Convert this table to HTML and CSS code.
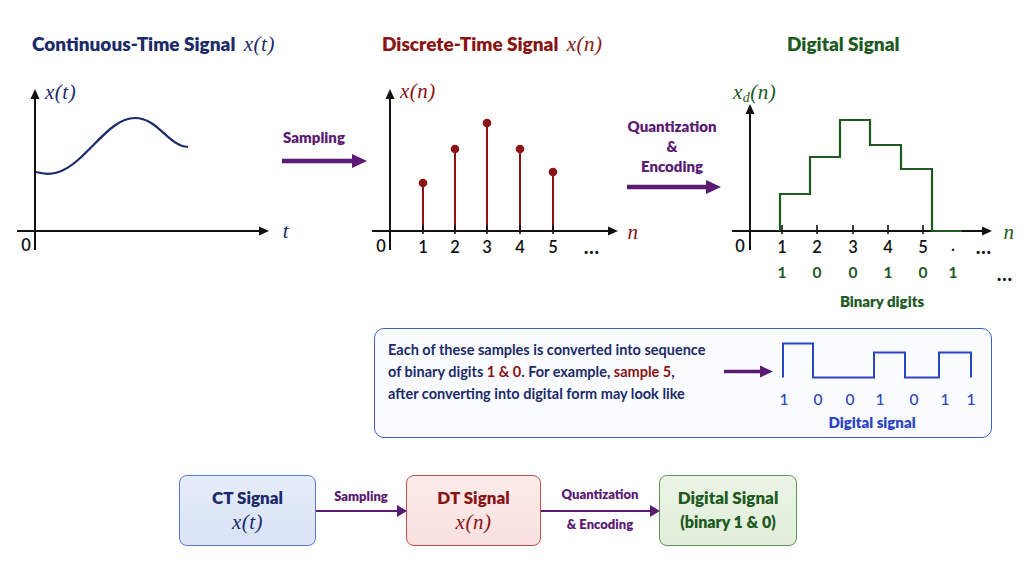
FILE: index.html
```html
<!DOCTYPE html>
<html lang="en">
<head>
<meta charset="utf-8">
<title>Continuous-Time, Discrete-Time and Digital Signals</title>
<link rel="stylesheet" href="styles.css">
</head>
<body>
<main class="page">
  <header class="titles">
    <h2 class="title navy">Continuous-Time Signal <span class="math">x(t)</span></h2>
    <h2 class="title red">Discrete-Time Signal <span class="math">x(n)</span></h2>
    <h2 class="title green">Digital Signal</h2>
  </header>

  <svg class="plots" width="1024" height="258" viewBox="0 60 1024 258" xmlns="http://www.w3.org/2000/svg">
    <!-- Panel 1: continuous-time -->
    <line class="ax" x1="35" y1="250" x2="35" y2="98"/>
    <polygon class="axh" points="35,89 30.5,99 39.5,99"/>
    <line class="ax" x1="17" y1="231" x2="260" y2="231"/>
    <polygon class="axh" points="269,231 259,226.5 259,235.5"/>
    <path class="curve" d="M36,172 C50,176 62,174 78,160 C100,140 115,118 135,118 C158,118 168,146 188,147"/>
    <text class="num" x="26" y="245">0</text>
    <text class="mathsvg navyf start" x="45" y="92">x(t)</text>
    <text class="mathsvg navyf" x="286" y="231">t</text>

    <!-- Sampling arrow -->
    <text class="arrlabel" x="314" y="137">Sampling</text>
    <line class="bigarrow" x1="282" y1="161" x2="354" y2="161"/>
    <polygon class="purplef" points="367,161 352,154 352,168"/>

    <!-- Panel 2: discrete-time -->
    <line class="ax" x1="390" y1="250" x2="390" y2="98"/>
    <polygon class="axh" points="390,89 385.5,99 394.5,99"/>
    <line class="ax" x1="372" y1="231" x2="609" y2="231"/>
    <polygon class="axh" points="618,231 608,226.5 608,235.5"/>
    <g class="stems">
      <line x1="423" y1="231" x2="423" y2="183"/>
      <line x1="455" y1="231" x2="455" y2="149"/>
      <line x1="487" y1="231" x2="487" y2="123"/>
      <line x1="520" y1="231" x2="520" y2="149"/>
      <line x1="553" y1="231" x2="553" y2="172"/>
    </g>
    <g class="ticks">
      <line x1="423" y1="225" x2="423" y2="234"/>
      <line x1="455" y1="225" x2="455" y2="234"/>
      <line x1="487" y1="225" x2="487" y2="234"/>
      <line x1="520" y1="225" x2="520" y2="234"/>
      <line x1="553" y1="225" x2="553" y2="234"/>
    </g>
    <g class="dots">
      <circle cx="423" cy="183" r="4.3"/>
      <circle cx="455" cy="149" r="4.3"/>
      <circle cx="487" cy="123" r="4.3"/>
      <circle cx="520" cy="149" r="4.3"/>
      <circle cx="553" cy="172" r="4.3"/>
    </g>
    <text class="num" x="381" y="246">0</text>
    <text class="num" x="423" y="247">1</text>
    <text class="num" x="455" y="247">2</text>
    <text class="num" x="487" y="247">3</text>
    <text class="num" x="520" y="247">4</text>
    <text class="num" x="553" y="247">5</text>
    <text class="ell" x="592" y="246">…</text>
    <text class="mathsvg redf start" x="400" y="91">x(n)</text>
    <text class="mathsvg redf" x="633" y="232">n</text>

    <!-- Quantization arrow -->
    <text class="arrlabel" x="672" y="126">Quantization</text>
    <text class="arrlabel" x="672" y="146">&amp;</text>
    <text class="arrlabel" x="672" y="166">Encoding</text>
    <line class="bigarrow" x1="627" y1="187" x2="708" y2="187"/>
    <polygon class="purplef" points="721,187 706,180 706,194"/>

    <!-- Panel 3: digital -->
    <line class="ax" x1="750" y1="250" x2="750" y2="113"/>
    <polygon class="axh" points="750,104 745.5,114 754.5,114"/>
    <line class="ax" x1="732" y1="231" x2="983" y2="231"/>
    <polygon class="axh" points="992,231 982,226.5 982,235.5"/>
    <g class="ticks">
      <line x1="782" y1="225" x2="782" y2="234"/>
      <line x1="817" y1="225" x2="817" y2="234"/>
      <line x1="853" y1="225" x2="853" y2="234"/>
      <line x1="888" y1="225" x2="888" y2="234"/>
      <line x1="923" y1="225" x2="923" y2="234"/>
    </g>
    <path class="steps" d="M780,231 V194 H810 V157 H840 V120 H870 V145 H901 V169 H932 V231 H962"/>
    <text class="num" x="740" y="246">0</text>
    <text class="num" x="782" y="247">1</text>
    <text class="num" x="817" y="247">2</text>
    <text class="num" x="853" y="247">3</text>
    <text class="num" x="888" y="247">4</text>
    <text class="num" x="923" y="247">5</text>
    <text class="num" x="953" y="245">.</text>
    <text class="ell" x="984" y="246">…</text>
    <g class="bin">
      <text x="782" y="272">1</text>
      <text x="817" y="272">0</text>
      <text x="853" y="272">0</text>
      <text x="888" y="272">1</text>
      <text x="923" y="272">0</text>
      <text x="953" y="272">1</text>
    </g>
    <text class="ell" x="1005" y="273">…</text>
    <text class="bintitle" x="882" y="301">Binary digits</text>
    <text class="mathsvg greenf start" x="733" y="92">x<tspan class="sub" dy="5">d</tspan><tspan dy="-5">(n)</tspan></text>
    <text class="mathsvg greenf" x="1009" y="232">n</text>
  </svg>

  <section class="info">
    <p class="info-text">Each of these samples is converted into sequence<br>of binary digits <span class="hl">1 &amp; 0</span>. For example, <span class="hl">sample 5</span>,<br>after converting into digital form may look like</p>
    <svg class="wave" width="278" height="107" viewBox="712 329.5 278 107" xmlns="http://www.w3.org/2000/svg">
      <line class="smallarrow" x1="723" y1="372" x2="760" y2="372"/>
      <polygon class="purplef" points="772,372 759,366 759,378"/>
      <path class="sq" d="M782,378 V344 H812 V378 H873 V353 H904 V378 H938 V353 H970 V378"/>
      <g class="wdig">
        <text x="783" y="399">1</text>
        <text x="817" y="399">0</text>
        <text x="849" y="399">0</text>
        <text x="879" y="399">1</text>
        <text x="913" y="399">0</text>
        <text x="944" y="399">1</text>
        <text x="970" y="399">1</text>
      </g>
      <text class="wlabel" x="871" y="422">Digital signal</text>
    </svg>
  </section>

  <section class="flow">
    <div class="box box-ct">
      <span class="box-title">CT Signal</span>
      <span class="math box-math">x(t)</span>
    </div>
    <div class="conn conn-s">
      <span class="conn-top">Sampling</span>
      <span class="conn-line"></span>
      <span class="conn-bottom"></span>
    </div>
    <div class="box box-dt">
      <span class="box-title">DT Signal</span>
      <span class="math box-math">x(n)</span>
    </div>
    <div class="conn conn-q">
      <span class="conn-top">Quantization</span>
      <span class="conn-line"></span>
      <span class="conn-bottom">&amp; Encoding</span>
    </div>
    <div class="box box-dg">
      <span class="box-title">Digital Signal</span>
      <span class="box-sub">(binary 1 &amp; 0)</span>
    </div>
  </section>
</main>
</body>
</html>
```

FILE: styles.css
```css
* { box-sizing: border-box; }

html, body {
  margin: 0;
  padding: 0;
  background: #ffffff;
}

body {
  font-family: Lato, "Open Sans", "Liberation Sans", sans-serif;
  color: #1b2a6b;
}

.page {
  width: 1024px;
  height: 576px;
  overflow: hidden;
}

/* ---------- titles ---------- */
.titles {
  display: grid;
  grid-template-columns: 350px 405px 1fr;
  padding: 32px 0 4px 32px;
  height: 60px;
}

.title {
  margin: 0;
  font-size: 19px;
  line-height: 24px;
  font-weight: 800;
  white-space: nowrap;
}

.navy { color: #1b2a6b; }
.red { color: #8a1414; }
.green { color: #1d5a1f; }

.math {
  font-family: "Liberation Serif", "DejaVu Serif", serif;
  font-style: italic;
  font-weight: 400;
  font-size: 21px;
  letter-spacing: 0.5px;
  margin-left: 4px;
}

/* ---------- plots ---------- */
.plots {
  display: block;
}

.plots text, .wave text {
  dominant-baseline: central;
  text-anchor: middle;
}

.plots text.start {
  text-anchor: start;
}

.ax {
  stroke: #111111;
  stroke-width: 2;
}

.axh { fill: #111111; }

.curve {
  fill: none;
  stroke: #1b2a6b;
  stroke-width: 2.2;
}

.stems line {
  stroke: #8a1414;
  stroke-width: 2;
}

.ticks line {
  stroke: #111111;
  stroke-width: 1.6;
}

.dots circle { fill: #8a1414; }

.steps {
  fill: none;
  stroke: #1d5a1f;
  stroke-width: 2.2;
}

.num {
  font-family: Lato, "Open Sans", sans-serif;
  font-size: 16.5px;
  font-weight: 600;
  fill: #111111;
}

.ell {
  font-family: Lato, "Open Sans", sans-serif;
  font-size: 20px;
  font-weight: 700;
  letter-spacing: 1px;
  fill: #111111;
}

.mathsvg {
  font-family: "Liberation Serif", "DejaVu Serif", serif;
  font-style: italic;
  font-size: 21px;
  letter-spacing: 0.5px;
}

.mathsvg .sub { font-size: 14px; }

.navyf { fill: #1b2a6b; }
.redf { fill: #8a1414; }
.greenf { fill: #1d5a1f; }
.purplef { fill: #5b1a73; }

.arrlabel {
  font-family: Lato, "Open Sans", sans-serif;
  font-size: 15px;
  font-weight: 800;
  fill: #5b1a73;
}

.bigarrow {
  stroke: #5b1a73;
  stroke-width: 4.5;
}

.bin text {
  font-family: Lato, "Open Sans", sans-serif;
  font-size: 15.5px;
  font-weight: 700;
  fill: #1d5a1f;
}

.bintitle {
  font-family: Lato, "Open Sans", sans-serif;
  font-size: 15px;
  font-weight: 800;
  fill: #1d5a1f;
}

/* ---------- info box ---------- */
.info {
  display: flex;
  align-items: flex-start;
  width: 618px;
  height: 110px;
  margin: 10px 0 0 374px;
  border: 1.5px solid #3f5fc8;
  border-radius: 10px;
  background: #fbfcff;
}

.info-text {
  flex: 1;
  margin: 0;
  padding: 10px 0 0 13px;
  font-size: 14.5px;
  line-height: 22px;
  font-weight: 700;
  color: #1b2a6b;
  white-space: nowrap;
}

.hl { color: #8a1414; }

.wave {
  display: block;
  flex: none;
}

.smallarrow {
  stroke: #5b1a73;
  stroke-width: 3.5;
}

.sq {
  fill: none;
  stroke: #2a45c4;
  stroke-width: 2;
}

.wdig text {
  font-family: Lato, "Open Sans", sans-serif;
  font-size: 15.5px;
  font-weight: 500;
  fill: #2a45c4;
}

.wlabel {
  font-family: Lato, "Open Sans", sans-serif;
  font-size: 15px;
  font-weight: 800;
  fill: #2a45c4;
}

/* ---------- flow ---------- */
.flow {
  display: flex;
  align-items: stretch;
  height: 71px;
  margin: 37px 0 0 179px;
}

.box {
  display: flex;
  flex-direction: column;
  align-items: center;
  justify-content: center;
  border-radius: 8px;
  border: 1.5px solid;
}

.box-ct {
  width: 137px;
  background: linear-gradient(#e6edfa, #d9e3f5);
  border-color: #5a7ad0;
  color: #1b2a6b;
}

.box-dt {
  width: 135px;
  background: linear-gradient(#fcecea, #f8e1df);
  border-color: #c0504d;
  color: #8a1414;
}

.box-dg {
  width: 138px;
  background: linear-gradient(#ecf5e6, #e1eed9);
  border-color: #5a9a52;
  color: #1d5a1f;
}

.box-title {
  font-size: 17px;
  font-weight: 800;
  line-height: 22px;
}

.box-math {
  margin-left: 0;
  font-size: 21px;
  line-height: 26px;
  color: inherit;
}

.box-sub {
  font-size: 16px;
  font-weight: 800;
  line-height: 26px;
}

.conn {
  display: grid;
  grid-template-rows: 1fr 2px 1fr;
  color: #5b1a73;
  font-size: 13px;
  font-weight: 800;
  text-align: center;
}

.conn-s { width: 90px; }
.conn-q { width: 118px; }

.conn-top {
  align-self: end;
  line-height: 16px;
  margin-bottom: 6px;
}

.conn-q .conn-top { margin-bottom: 8px; }

.conn-bottom {
  align-self: start;
  line-height: 16px;
  margin-top: 4px;
}

.conn-line {
  position: relative;
  background: #5b1a73;
  margin-right: 8px;
}

.conn-line::after {
  content: "";
  position: absolute;
  right: -9px;
  top: -5px;
  border-left: 10px solid #5b1a73;
  border-top: 6px solid transparent;
  border-bottom: 6px solid transparent;
}
```
